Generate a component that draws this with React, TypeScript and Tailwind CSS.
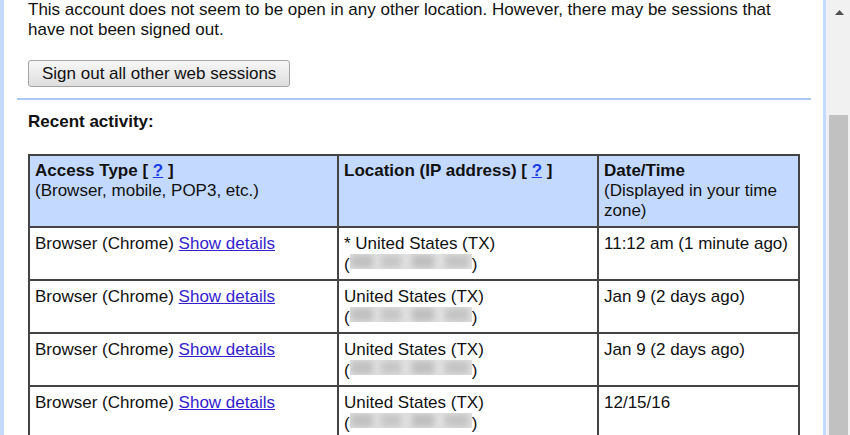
import React from "react";

const Blur = () => (
  <span className="relative inline-block w-[122px] h-[15px] align-[1px] overflow-hidden bg-[#e0e0e0]">
    <span className="absolute left-[1px] top-[1px] w-[22px] h-[13px] bg-[#c0c0c0] blur-[3px]" />
    <span className="absolute left-[31px] top-[1px] w-[20px] h-[13px] bg-[#c6c6c6] blur-[3px]" />
    <span className="absolute left-[62px] top-[1px] w-[22px] h-[13px] bg-[#bebebe] blur-[3px]" />
    <span className="absolute left-[95px] top-[1px] w-[24px] h-[13px] bg-[#c4c4c4] blur-[3px]" />
  </span>
);

const rows = [
  { loc: "* United States (TX)", date: "11:12 am (1 minute ago)" },
  { loc: "United States (TX)", date: "Jan 9 (2 days ago)" },
  { loc: "United States (TX)", date: "Jan 9 (2 days ago)" },
  { loc: "United States (TX)", date: "12/15/16" },
];

export default function App() {
  return (
    <div className="w-[850px] h-[435px] overflow-hidden flex bg-white text-[#111] font-['Liberation_Sans',Arial,sans-serif] text-[17px] leading-[20px]">
      <div className="w-[4px] shrink-0 bg-[#c3d9ff]" />
      <div className="w-[819px] shrink-0 flex flex-col">
        <div className="pl-[24px] pr-[12px] shrink-0">
          <p className="leading-[19.5px] whitespace-nowrap">
            This account does not seem to be open in any other location. However, there may be sessions that
            <br />
            have not been signed out.
          </p>
          <button className="mt-[21px] h-[27px] px-[13px] border border-[#a4a4a4] rounded-[3px] bg-gradient-to-b from-[#f7f7f7] to-[#dedede] text-[#111] leading-[20px] whitespace-nowrap">
            Sign out all other web sessions
          </button>
        </div>
        <div className="ml-[13px] mr-[12px] mt-[11px] h-[2px] shrink-0 bg-[#abc8f6]" />
        <div className="pl-[24px] shrink-0">
          <div className="mt-[12px] font-bold">Recent activity:</div>
          <div className="mt-[22px] w-[772px] grid grid-cols-[307px_258px_199px] gap-[2px] p-[2px] bg-[#444]">
            <div className="h-[70px] bg-[#c3d9ff] px-[5px] pt-[5px]">
              <div className="font-bold whitespace-nowrap">
                Access Type [ <span className="text-[#1c3ce6] underline">?</span> ]
              </div>
              <div>(Browser, mobile, POP3, etc.)</div>
            </div>
            <div className="h-[70px] bg-[#c3d9ff] px-[5px] pt-[5px]">
              <div className="font-bold whitespace-nowrap">
                Location (IP address) [ <span className="text-[#1c3ce6] underline">?</span> ]
              </div>
            </div>
            <div className="h-[70px] bg-[#c3d9ff] px-[5px] pt-[5px]">
              <div className="font-bold">Date/Time</div>
              <div>(Displayed in your time zone)</div>
            </div>
            {rows.map((r, i) => (
              <React.Fragment key={i}>
                <div className="h-[51px] bg-white px-[5px] pt-[6px] whitespace-nowrap">
                  Browser (Chrome) <span className="text-[#3322cc] underline">Show details</span>
                </div>
                <div className="h-[51px] bg-white px-[5px] pt-[6px] whitespace-nowrap">
                  <div>{r.loc}</div>
                  <div>
                    (<Blur />)
                  </div>
                </div>
                <div className="h-[51px] bg-white px-[5px] pt-[6px] whitespace-nowrap">{r.date}</div>
              </React.Fragment>
            ))}
          </div>
        </div>
      </div>
      <div className="w-[3px] shrink-0 bg-[#c3d9ff]" />
      <div className="w-[24px] shrink-0 bg-[#f1f1f1] flex flex-col">
        <div className="h-[24px] flex items-center justify-center pl-[2px]">
          <svg width="9" height="5" viewBox="0 0 9 5">
            <path d="M0 5 L4.5 0 L9 5 Z" fill="#505050" />
          </svg>
        </div>
        <div className="mt-[91px] ml-[3px] mr-[2px] flex-1 bg-[#c1c1c1]" />
      </div>
    </div>
  );
}
